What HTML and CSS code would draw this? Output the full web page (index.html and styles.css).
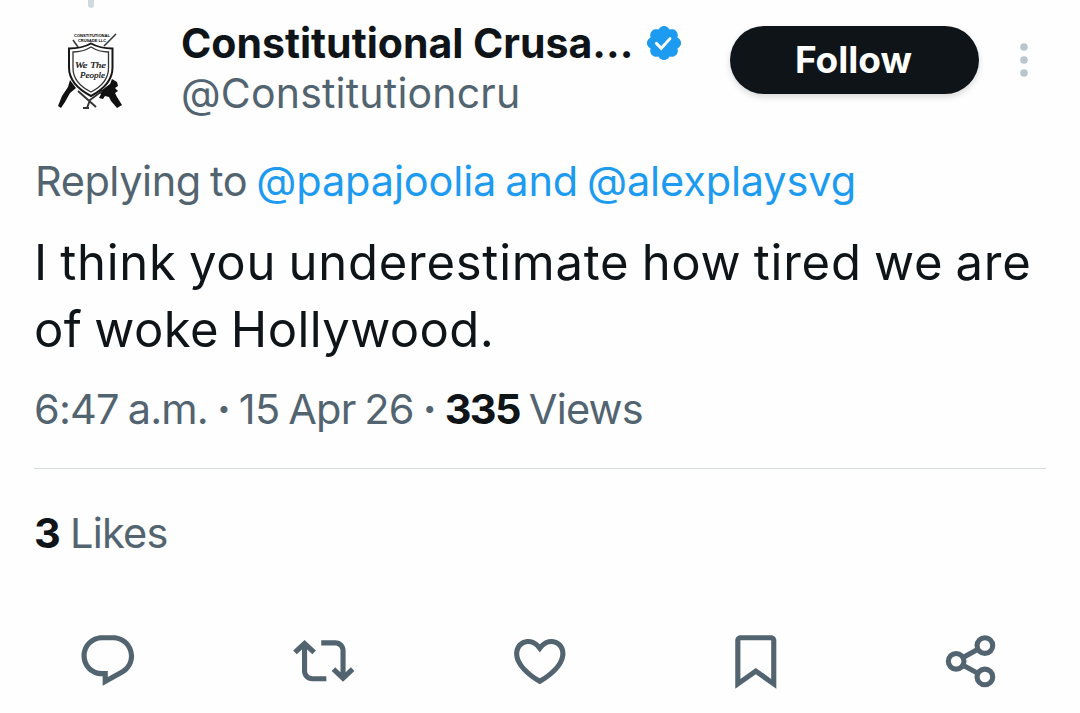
FILE: index.html
```html
<!DOCTYPE html>
<html lang="en">
<head>
  <meta charset="UTF-8" />
  <meta name="viewport" content="width=device-width, initial-scale=1.0"/>
  <title>Constitutional Crusade on X</title>
  <link rel="stylesheet" href="styles.css">
</head>
<body>
  <article class="post">
    <header class="post-header">
      <div class="avatar-col">
        <span class="thread-line"></span>
        <svg class="avatar" viewBox="0 0 110 112">
          <text class="logo-caps" x="34" y="37" textLength="36" lengthAdjust="spacingAndGlyphs">CONSTITUTIONAL</text>
          <text class="logo-caps" x="38" y="41.8" textLength="28" lengthAdjust="spacingAndGlyphs">CRUSADE LLC</text>
          <path d="M33 40l5 7M64 46l5-5 7-7" stroke="#333" stroke-width="1.5" fill="none"/>
          <path d="M30 80l6 8-6 5-5 9-4 6-3-2 4-10 6-9z" fill="#111"/>
          <path d="M62 90l8-6 2-5 5 3 1 4-3 2 3 3-3 2 2 4 5 8-5 3-6-7-2-4-4-1-2 3-4-1 2-4-4-3z" fill="#111"/>
          <path d="M38 91l18 16M62 91l-12 9-3 8M43 108h6" stroke="#333" stroke-width="1.9" fill="none"/>
          <path d="M29 48.5q13 0 22-5 9 5 21.500 5v19q0 17-21.500 28.500Q29 84.500 29 67.500z" fill="#fff" stroke="#171717" stroke-width="2"/>
          <path d="M33 52q10 0 18-5 8 5 17.500 5v16q0 15-17.500 24Q33 83 33 68z" fill="#fff" stroke="#333" stroke-width="1.300"/>
          <text class="logo-script" x="35" y="68" textLength="31" lengthAdjust="spacingAndGlyphs">We The</text>
          <text class="logo-script" x="40" y="77.8" textLength="25" lengthAdjust="spacingAndGlyphs">People</text>
        </svg>
      </div>

      <div class="author">
        <div class="name-row">
          <span class="name">Constitutional Crusa...</span>
          <svg class="verified" viewBox="0 0 22 22">
            <path fill="#1d9bf0" d="M20.396 11c-.018-.646-.215-1.275-.57-1.816-.354-.54-.852-.972-1.438-1.246.223-.607.27-1.264.14-1.897-.131-.634-.437-1.218-.882-1.687-.47-.445-1.053-.75-1.687-.882-.633-.13-1.29-.083-1.897.14-.273-.587-.704-1.086-1.245-1.44S11.647 1.62 11 1.604c-.646.017-1.273.213-1.813.568s-.969.854-1.24 1.44c-.608-.223-1.267-.272-1.902-.14-.635.13-1.22.436-1.69.882-.445.47-.749 1.055-.878 1.688-.13.633-.08 1.29.144 1.896-.587.274-1.087.705-1.443 1.245-.356.54-.555 1.17-.574 1.817.02.647.218 1.276.574 1.817.356.54.856.972 1.443 1.245-.224.606-.274 1.263-.144 1.896.13.634.433 1.218.877 1.688.47.443 1.054.747 1.687.878.633.132 1.29.084 1.897-.136.274.586.705 1.084 1.246 1.439.54.354 1.17.551 1.816.569.647-.016 1.276-.213 1.817-.567s.972-.854 1.245-1.44c.604.239 1.266.296 1.903.164.636-.132 1.22-.447 1.68-.907.46-.46.776-1.044.908-1.681s.075-1.299-.165-1.903c.586-.274 1.084-.705 1.439-1.246.354-.54.551-1.17.569-1.816z"/>
            <path d="M6.8 11.2l2.7 2.7 4.8-5.3" fill="none" stroke="#fff" stroke-width="1.6" stroke-linecap="round"/>
          </svg>
        </div>
        <div class="handle">@Constitutioncru</div>
      </div>

      <button class="follow">Follow</button>
      <svg class="more" viewBox="0 0 10 36">
        <circle cx="5" cy="5" r="3.8"/>
        <circle cx="5" cy="18" r="3.8"/>
        <circle cx="5" cy="31" r="3.8"/>
      </svg>
    </header>

    <div class="replying">Replying to <a>@papajoolia and @alexplaysvg</a></div>

    <p class="text">I think you underestimate how tired we are<br><span class="line-two">of woke Hollywood.</span></p>

    <div class="meta">6:47 a.m. <span class="dot">·</span> 15 Apr 26 <span class="dot">·</span> <b>335</b> Views</div>

    <div class="likes"><b>3</b> Likes</div>

    <div class="actions">
      <svg viewBox="0 0 24 24"><path d="M1.751 10c0-4.42 3.584-8 8.005-8h4.366c4.49 0 8.129 3.64 8.129 8.13 0 2.96-1.607 5.68-4.196 7.11l-8.054 4.46v-3.69h-.067c-4.49.1-8.183-3.51-8.183-8.01zm8.005-6c-3.317 0-6.005 2.69-6.005 6 0 3.37 2.77 6.08 6.138 6.01l.351-.01h1.761v2.3l5.087-2.81c1.951-1.08 3.163-3.13 3.163-5.36 0-3.39-2.744-6.13-6.129-6.13H9.756z"/></svg>
      <svg viewBox="0 0 24 24"><path d="M4.5 3.88l4.432 4.14-1.364 1.46L5.5 7.55V16c0 1.1.896 2 2 2H13v2H7.5c-2.209 0-4-1.79-4-4V7.55L1.432 9.48.068 8.02 4.5 3.88zM16.5 6H11V4h5.5c2.209 0 4 1.79 4 4v8.45l2.068-1.93 1.364 1.46-4.432 4.14-4.432-4.14 1.364-1.46 2.068 1.93V8c0-1.1-.896-2-2-2z"/></svg>
      <svg viewBox="0 0 24 24"><path d="M16.697 5.5c-1.222-.06-2.679.51-3.89 2.16l-.805 1.09-.806-1.09C9.984 6.01 8.526 5.44 7.304 5.5c-1.243.07-2.349.78-2.91 1.91-.552 1.12-.633 2.78.479 4.82 1.074 1.97 3.257 4.27 7.129 6.61 3.87-2.34 6.052-4.64 7.126-6.61 1.111-2.04 1.03-3.7.477-4.82-.561-1.13-1.666-1.84-2.908-1.91zm4.187 7.69c-1.351 2.48-4.001 5.12-8.379 7.67l-.503.3-.504-.3c-4.379-2.55-7.029-5.19-8.382-7.67-1.36-2.5-1.41-4.86-.514-6.67.887-1.79 2.647-2.91 4.601-3.01 1.651-.09 3.368.56 4.798 2.01 1.429-1.45 3.146-2.1 4.796-2.01 1.954.1 3.714 1.22 4.601 3.01.896 1.81.846 4.17-.514 6.67z"/></svg>
      <svg viewBox="0 0 24 24"><path d="M4 4c0-1.1.9-2 2-2h12c1.1 0 2 .9 2 2v18.94l-8-5.71-8 5.71V4zm2 0v15.06l6-4.29 6 4.29V4H6z"/></svg>
      <svg viewBox="0 0 24 24"><g fill="none" stroke="#536471" stroke-width="2"><circle cx="5.9" cy="12.2" r="3.05"/><circle cx="17.1" cy="6.05" r="3.05"/><circle cx="17.1" cy="18.3" r="3.05"/><path d="M8.6 10.7l5.8-3.2M8.6 13.7l5.8 3.2"/></g></svg>
    </div>
  </article>
</body>
</html>
```
FILE: styles.css
```css
body {
  margin: 0;
  background-color: #fefefe;
  color: #0f1419;
  font-family: Inter, 'Liberation Sans', sans-serif;
  font-size: 41.5px;
  line-height: 50px;
  white-space: nowrap;
  overflow: hidden;
}

b {
  color: #0f1419;
  font-weight: 700;
  letter-spacing: -1.6px;
}

.post-header {
  display: flex;
  align-items: flex-start;
  height: 156px;
}

.avatar-col {
  width: 181px;
  display: flex;
  flex-direction: column;
}

.thread-line {
  width: 6px;
  height: 8px;
  margin-left: 88px;
  border-radius: 0 0 3px 3px;
  background-color: #cfd9de;
}

.avatar {
  width: 110px;
  height: 112px;
  margin: -8px 0 0 40px;
}

.logo-caps {
  font: bold 4px 'Liberation Sans', sans-serif;
}

.logo-script {
  font: italic 8.5px 'Liberation Serif', serif;
  stroke: #0f1419;
  stroke-width: 0.2px;
}

.author {
  width: 549px;
  padding-top: 17.5px;
}

.name-row {
  display: flex;
  align-items: center;
}

.name {
  width: 463px;
  font-size: 41px;
  font-weight: 700;
}

.verified {
  width: 40px;
  height: 40px;
}

.handle {
  font-size: 41px;
  letter-spacing: 0.2px;
  color: #536471;
}

.follow {
  width: 249px;
  height: 68px;
  margin: 25.5px 40px 0 0;
  padding: 0 2px 0 0;
  border: none;
  border-radius: 34px;
  background-color: #0f1419;
  color: #fff;
  font-family: inherit;
  font-size: 37px;
  font-weight: 700;
  box-shadow: 0 3px 6px rgba(0, 0, 0, 0.15);
}

.more {
  width: 10px;
  height: 36px;
  margin-top: 41.5px;
  fill: #b9c6ce;
}

.replying {
  padding-left: 35px;
  color: #536471;
  letter-spacing: -0.45px;
  word-spacing: -2px;
}

.replying a {
  color: #1d9bf0;
  letter-spacing: -0.15px;
  word-spacing: -2.5px;
}

.text {
  margin: 23px 0 21px 34px;
  font-size: 49px;
  line-height: 67px;
  letter-spacing: 0.75px;
  word-spacing: -2.2px;
}

.line-two {
  letter-spacing: 0.4px;
}

.meta {
  margin: 0 34px;
  padding-bottom: 34px;
  border-bottom: 1px solid #d5dadd;
  color: #536471;
  letter-spacing: -0.8px;
  word-spacing: -2px;
}

.dot {
  font-weight: 700;
}

.likes {
  margin: 39px 34px 0;
  color: #536471;
  letter-spacing: -0.8px;
}

.actions {
  display: grid;
  grid-template-columns: repeat(5, 1fr);
  justify-items: center;
  margin-top: 72px;
}

.actions svg {
  width: 61.6px;
  height: 61.6px;
  fill: #536471;
}
```
